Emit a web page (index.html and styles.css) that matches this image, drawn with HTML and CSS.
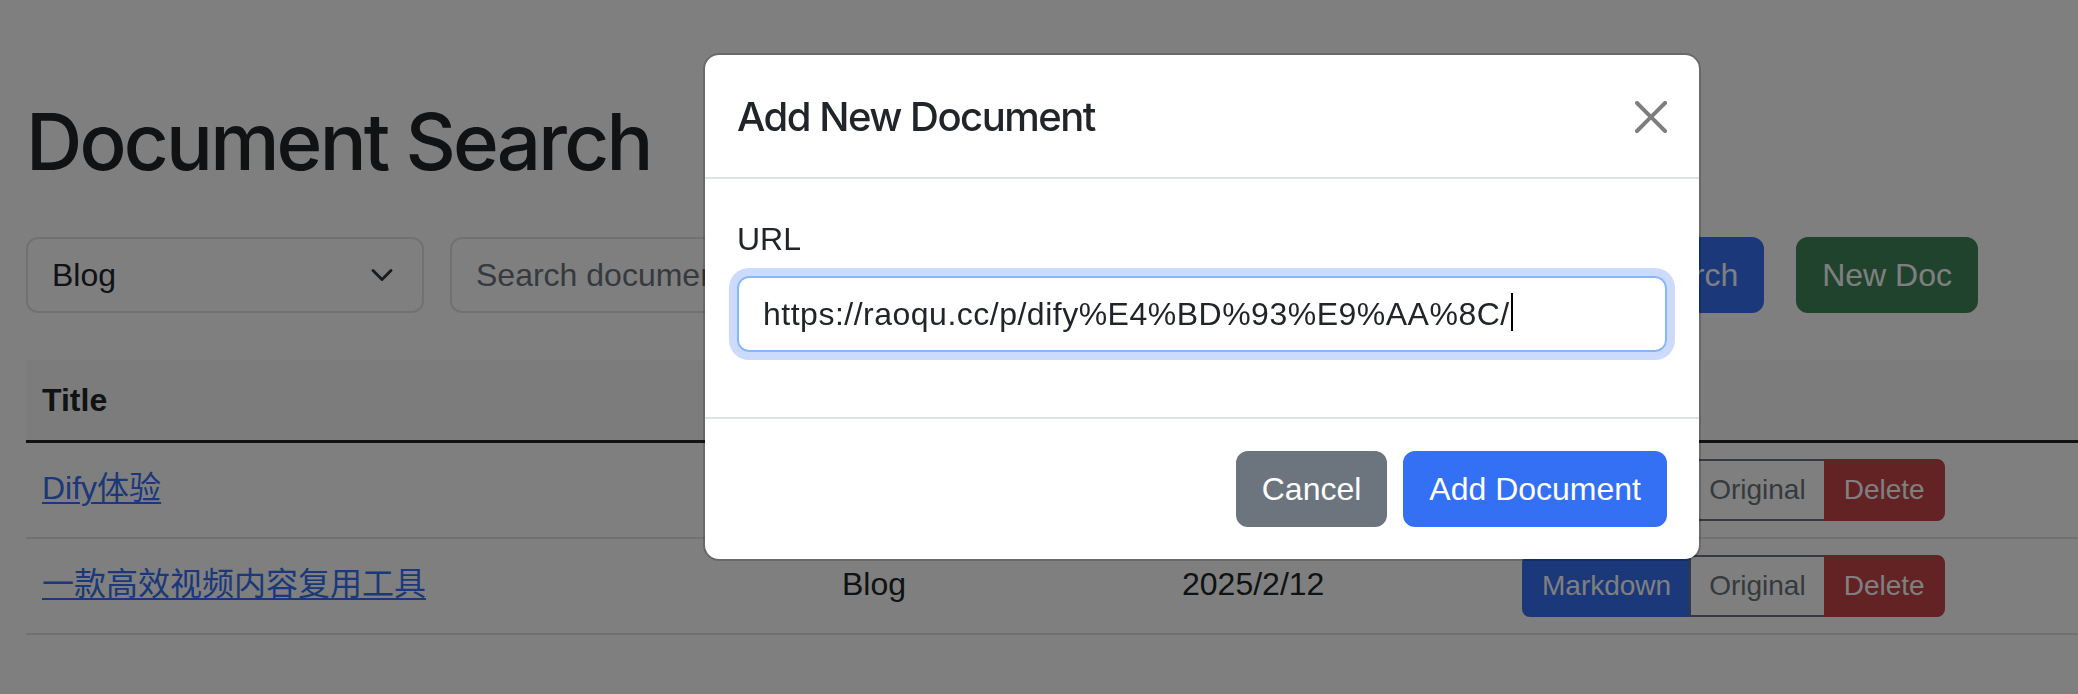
FILE: index.html
```html
<!DOCTYPE html>
<html lang="en">
<head>
<meta charset="utf-8">
<title>Document Search</title>
<link rel="stylesheet" href="styles.css">
</head>
<body>
<main class="page">
  <h1 class="page-title">Document Search</h1>
  <div class="toolbar">
    <div class="select-box">
      <span>Blog</span>
      <svg class="chevron" viewBox="0 0 16 16" width="32" height="24" aria-hidden="true"><path d="m2 5 6 6 6-6" fill="none" stroke="#343a40" stroke-width="2" stroke-linecap="round" stroke-linejoin="round"/></svg>
    </div>
    <input class="search-input" type="text" placeholder="Search documents...">
    <button class="btn btn-primary search-btn">Search</button>
    <button class="btn btn-success new-doc">New Doc</button>
  </div>
  <table class="doc-table">
    <colgroup>
      <col class="col-title">
      <col class="col-cat">
      <col class="col-date">
      <col>
    </colgroup>
    <thead>
      <tr><th>Title</th><th>Category</th><th>Date</th><th>Actions</th></tr>
    </thead>
    <tbody>
      <tr>
        <td class="text-cell"><a href="#">Dify体验</a></td>
        <td class="text-cell">Blog</td>
        <td class="text-cell">2025/2/12</td>
        <td>
          <div class="btn-group">
            <button class="btn-sm sm-primary">Markdown</button>
            <button class="btn-sm sm-outline">Original</button>
            <button class="btn-sm sm-danger">Delete</button>
          </div>
        </td>
      </tr>
      <tr>
        <td class="text-cell"><a href="#">一款高效视频内容复用工具</a></td>
        <td class="text-cell">Blog</td>
        <td class="text-cell">2025/2/12</td>
        <td>
          <div class="btn-group">
            <button class="btn-sm sm-primary">Markdown</button>
            <button class="btn-sm sm-outline">Original</button>
            <button class="btn-sm sm-danger">Delete</button>
          </div>
        </td>
      </tr>
    </tbody>
  </table>
</main>

<div class="backdrop"></div>

<div class="modal" role="dialog" aria-labelledby="modal-title">
  <div class="modal-content">
    <div class="modal-header">
      <h5 class="modal-title" id="modal-title">Add New Document</h5>
      <button class="btn-close" aria-label="Close">
        <svg viewBox="0 0 16 16" width="32" height="32" aria-hidden="true"><path d="M.293.293a1 1 0 0 1 1.414 0L8 6.586 14.293.293a1 1 0 1 1 1.414 1.414L9.414 8l6.293 6.293a1 1 0 0 1-1.414 1.414L8 9.414l-6.293 6.293a1 1 0 0 1-1.414-1.414L6.586 8 .293 1.707a1 1 0 0 1 0-1.414z"/></svg>
      </button>
    </div>
    <div class="modal-body">
      <label class="form-label">URL</label>
      <div class="url-field" role="textbox">https://raoqu.cc/p/dify%E4%BD%93%E9%AA%8C/<span class="caret"></span></div>
    </div>
    <div class="modal-footer">
      <button class="btn btn-secondary">Cancel</button>
      <button class="btn btn-primary">Add Document</button>
    </div>
  </div>
</div>
</body>
</html>
```

FILE: styles.css
```css
* {
  box-sizing: border-box;
}

html,
body {
  margin: 0;
}

body {
  width: 2078px;
  height: 694px;
  overflow: hidden;
  font-family: "Liberation Sans", "Noto Sans CJK SC", sans-serif;
  font-size: 32px;
  line-height: 1.5;
  color: #212529;
  background: #fff;
}

/* ---------- page ---------- */
.page {
  padding: 94px 0 0 26px;
}

.page-title {
  margin: 0 0 47px;
  font-family: Inter, "Liberation Sans", sans-serif;
  font-size: 78px;
  font-weight: 500;
  line-height: 96px;
  letter-spacing: -2.8px;
}

.toolbar {
  display: flex;
  height: 76px;
  margin: 0 100px 47px 0;
}

.select-box {
  width: 398px;
  display: flex;
  align-items: center;
  justify-content: space-between;
  padding: 12px 24px;
  border: 2px solid #dee2e6;
  border-radius: 12px;
  background: #fff;
}

.chevron {
  display: block;
}

.search-input {
  flex: 1;
  min-width: 0;
  margin-left: 26px;
  padding: 12px 24px;
  font: inherit;
  color: #212529;
  border: 2px solid #dee2e6;
  border-radius: 12px;
  background: #fff;
  outline: none;
}

.search-input::placeholder {
  color: #6c757d;
}

.btn {
  font: inherit;
  line-height: 48px;
  padding: 12px 24px;
  border: 2px solid transparent;
  border-radius: 12px;
  color: #fff;
  white-space: nowrap;
}

.btn-primary {
  background: #3470f4;
  border-color: #3470f4;
}

.btn-success {
  background: #41865b;
  border-color: #41865b;
}

.btn-secondary {
  background: #6c757d;
  border-color: #6c757d;
}

.search-btn {
  margin-left: 26px;
}

.new-doc {
  margin-left: 32px;
}

/* ---------- table ---------- */
.doc-table {
  width: 100%;
  border-collapse: collapse;
  table-layout: fixed;
}

.col-title {
  width: 800px;
}

.col-cat,
.col-date {
  width: 340px;
}

.doc-table th,
.doc-table td {
  padding: 16px;
  text-align: left;
  vertical-align: top;
  border-bottom: 2px solid #dee2e6;
  white-space: nowrap;
}

.doc-table th {
  background: #f8f9fa;
  font-weight: 700;
  border-bottom: 3px solid #212529;
}

.doc-table .text-cell {
  padding-top: 21px;
}

.doc-table a {
  color: #3470f4;
  text-decoration: underline;
  text-decoration-thickness: 2px;
  text-underline-offset: 3px;
}

.btn-group {
  display: flex;
  width: max-content;
}

.btn-sm {
  font: inherit;
  font-size: 28px;
  line-height: 42px;
  padding: 8px 18px;
  border: 2px solid transparent;
  color: #fff;
  border-radius: 0;
}

.btn-sm + .btn-sm {
  margin-left: -2px;
}

.btn-sm:first-child {
  border-radius: 8px 0 0 8px;
}

.btn-sm:last-child {
  border-radius: 0 8px 8px 0;
}

.sm-primary {
  background: #3470f4;
  border-color: #3470f4;
}

.sm-outline {
  background: transparent;
  border-color: #6c757d;
  color: #6c757d;
}

.sm-danger {
  background: #c64448;
  border-color: #c64448;
}

/* ---------- modal ---------- */
.backdrop {
  position: fixed;
  inset: 0;
  background: rgba(0, 0, 0, 0.5);
}

.modal {
  position: fixed;
  top: 53px;
  left: 703px;
  width: 998px;
}

.modal-content {
  background: #fff;
  background-clip: padding-box;
  border: 2px solid rgba(0, 0, 0, 0.175);
  border-radius: 16px;
}

.modal-header {
  display: flex;
  align-items: center;
  padding: 32px 32px 30px;
  border-bottom: 2px solid #dee2e6;
}

.modal-title {
  margin: 0;
  font-family: Inter, "Liberation Sans", sans-serif;
  font-size: 40px;
  font-weight: 500;
  line-height: 1.5;
  letter-spacing: -1.5px;
}

.btn-close {
  box-sizing: content-box;
  width: 32px;
  height: 32px;
  padding: 16px;
  margin: -16px -16px -16px auto;
  border: 0;
  background: transparent;
  opacity: 0.5;
}

.btn-close svg {
  display: block;
  fill: #000;
}

.modal-body {
  padding: 32px;
}

.form-label {
  display: block;
  padding-top: 4px;
  margin-bottom: 13px;
  line-height: 48px;
}

.url-field {
  margin-bottom: 33px;
  padding: 12px 24px;
  line-height: 48px;
  letter-spacing: 0.5px;
  border: 2px solid #86b7fe;
  border-radius: 12px;
  box-shadow: 0 0 0 8px rgba(52, 112, 244, 0.25);
  white-space: nowrap;
  overflow: hidden;
}

.caret {
  display: inline-block;
  width: 2px;
  height: 38px;
  margin-left: 1px;
  vertical-align: -6px;
  background: #000;
}

.modal-footer {
  display: flex;
  justify-content: flex-end;
  padding: 24px;
  border-top: 2px solid #dee2e6;
}

.modal-footer .btn {
  margin: 8px;
}

.modal-footer .btn + .btn {
  margin-left: 8px;
}
```
